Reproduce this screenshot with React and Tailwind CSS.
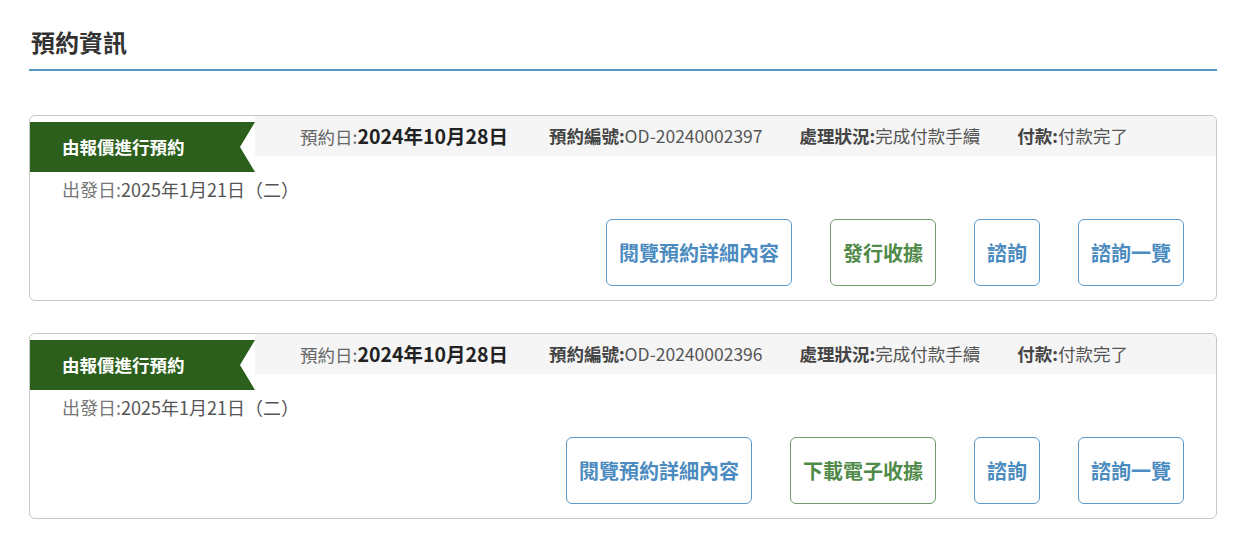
import React from 'react';

const font = { fontFamily: '"Noto Sans CJK TC", "Noto Sans", sans-serif' };

const bookings = [
  {
    id: 'OD-20240002397',
    date: '2024年10月28日',
    depart: '2025年1月21日（二）',
    receipt: '發行收據',
  },
  {
    id: 'OD-20240002396',
    date: '2024年10月28日',
    depart: '2025年1月21日（二）',
    receipt: '下載電子收據',
  },
];

const BlueButton = ({ children }) => (
  <button className="h-[67px] px-[12px] rounded-md border border-[#5c9bc9] bg-white text-[#4b8bc0] text-[20px] font-bold">
    {children}
  </button>
);

const GreenButton = ({ children }) => (
  <button className="h-[67px] px-[12px] rounded-md border border-[#6f9a6a] bg-white text-[#4f8a49] text-[20px] font-bold">
    {children}
  </button>
);

const BookingCard = ({ booking }) => (
  <div className="relative border border-[#c6c6c6] rounded-md bg-white">
    <div className="absolute left-0 top-[6px] w-[225px] h-[50px] bg-[#2c5f1b] flex items-center pl-[32px] [clip-path:polygon(0_0,100%_0,210px_50%,100%_100%,0_100%)]">
      <span className="text-white text-[17.5px] font-bold">由報價進行預約</span>
    </div>
    <div className="flex pl-[225px] rounded-t-md">
      <div className="flex-1 h-[40px] bg-[#f5f5f5] rounded-tr-md flex items-center pl-[45px] gap-[37px] text-[17.5px] text-[#555]">
        <span className="mr-[4px]">
          <span className="text-[#666]">預約日:</span>
          <span className="font-bold text-[#222] text-[19.5px]">{booking.date}</span>
        </span>
        <span>
          <span className="font-bold text-[#444]">預約編號:</span>
          {booking.id}
        </span>
        <span>
          <span className="font-bold text-[#444]">處理狀況:</span>
          完成付款手續
        </span>
        <span>
          <span className="font-bold text-[#444]">付款:</span>
          付款完了
        </span>
      </div>
    </div>
    <div className="pt-[21px] pl-[32px] text-[18px] leading-[24px] text-[#555]">
      <span className="text-[#777]">出發日:</span>
      {booking.depart}
    </div>
    <div className="flex justify-end gap-[38px] mt-[18px] pr-[32px] pb-[14px]">
      <BlueButton>閱覽預約詳細內容</BlueButton>
      <GreenButton>{booking.receipt}</GreenButton>
      <BlueButton>諮詢</BlueButton>
      <BlueButton>諮詢一覽</BlueButton>
    </div>
  </div>
);

export default function App() {
  return (
    <div className="min-h-screen bg-white" style={font}>
      <div className="pl-[29px] w-[1217px]">
        <div className="pt-[25px] pb-[10px] border-b-2 border-[#5496c4]">
          <h1 className="pl-[2px] text-[24px] leading-[34px] font-bold text-[#333]">預約資訊</h1>
        </div>
        <div className="mt-[44px] flex flex-col gap-[32px]">
          {bookings.map((b) => (
            <BookingCard key={b.id} booking={b} />
          ))}
        </div>
      </div>
    </div>
  );
}
